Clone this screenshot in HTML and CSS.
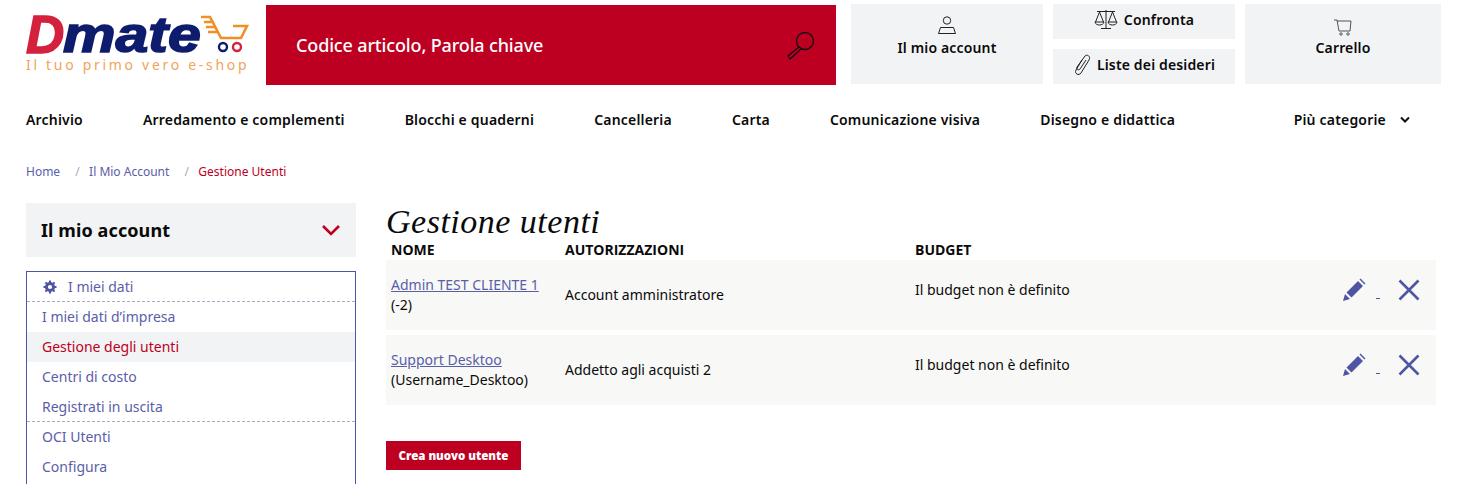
FILE: index.html
```html
<!DOCTYPE html>
<html lang="it">
<head>
    <meta charset="UTF-8">
    <title>Gestione utenti</title>
    <link rel="stylesheet" href="styles.css">
</head>
<body>

    <header class="header-container">
        <a class="logo">
            <div class="logo-top">
                <span class="logo-d">D</span><span class="logo-mate">mate</span>
                <svg class="logo-cart" width="50" height="40" viewBox="0 0 50 40">
                    <path d="M1 2h9l11 21h20l6-12H33" fill="none" stroke="#ef8f24" stroke-width="2.600"/>
                    <path d="M4 7h8M6 12h9M8 17h9" fill="none" stroke="#ef8f24" stroke-width="2.400"/>
                    <circle cx="23" cy="32" r="4" fill="#fff" stroke="#0e1c6e" stroke-width="2.400"/>
                    <circle cx="37" cy="32" r="4" fill="#fff" stroke="#d4213d" stroke-width="2.400"/>
                </svg>
            </div>
            <div class="logo-sub">Il tuo primo vero e-shop</div>
        </a>

        <div class="search-bar">
            <span>Codice articolo, Parola chiave</span>
            <svg width="30" height="30" viewBox="0 0 30 30">
                <circle cx="19" cy="11" r="8.500" fill="none" stroke="#111" stroke-width="1.300"/>
                <path d="M13 17l-11 9 2 3 11-10" fill="none" stroke="#111" stroke-width="1.300"/>
            </svg>
        </div>

        <a class="head-box account-box">
            <svg width="20" height="20" viewBox="0 0 20 20">
                <circle cx="10" cy="4.500" r="3.700" fill="none" stroke="#222"/>
                <path d="M3.500 11.500h13l2 6h-17z" fill="none" stroke="#222"/>
            </svg>
            <span>Il mio account</span>
        </a>

        <div class="head-stack">
            <a class="head-small">
                <svg width="24" height="20" viewBox="0 0 24 20">
                    <path d="M12 0v18M7 18.500h10M3 1.500h18M5.500 2L1.500 12M5.500 2l4 10M18.500 2l-4 10M18.500 2l4 10M1 12h9c-.5 4-8.500 4-9 0zM14 12h9c-.5 4-8.500 4-9 0z" fill="none" stroke="#222"/>
                </svg>
                <span>Confronta</span>
            </a>
            <a class="head-small">
                <svg width="18" height="21" viewBox="0 0 18 21">
                    <path d="M9 6L3 16c-2 4 3 6 5 3L16 6c2-4-2-6-4-4L4 13c-1 2 1 4 3 2l6-9" fill="none" stroke="#222"/>
                </svg>
                <span>Liste dei desideri</span>
            </a>
        </div>

        <a class="head-box cart-box">
            <svg width="20" height="18" viewBox="0 0 20 18">
                <path d="M1 2h3l2 11h11l1-10H4" fill="none" stroke="#555"/>
                <circle cx="8" cy="16" r="1.200" fill="none" stroke="#555"/>
                <circle cx="15" cy="16" r="1.200" fill="none" stroke="#555"/>
            </svg>
            <span>Carrello</span>
        </a>
    </header>

    <nav class="main-nav">
        <a>Archivio</a>
        <a>Arredamento e complementi</a>
        <a>Blocchi e quaderni</a>
        <a>Cancelleria</a>
        <a>Carta</a>
        <a>Comunicazione visiva</a>
        <a>Disegno e didattica</a>
        <a class="nav-more">Più categorie
            <svg width="10" height="8" viewBox="0 0 10 8"><path d="M1 1.500l4 4 4-4" fill="none" stroke="#111" stroke-width="2"/></svg>
        </a>
    </nav>

    <div class="breadcrumb">
        <a>Home</a><i>/</i><a>Il Mio Account</a><i>/</i><a class="current">Gestione Utenti</a>
    </div>

    <div class="page-columns">
        <aside class="sidebar">
            <div class="side-title">
                <span>Il mio account</span>
                <svg width="18" height="12" viewBox="0 0 18 12"><path d="M1 2l8 8 8-8" fill="none" stroke="#bd0021" stroke-width="2.600"/></svg>
            </div>
            <ul class="side-menu">
                <li class="side-group">
                    <svg width="14" height="14" viewBox="0 0 14 14">
                        <circle cx="7" cy="7" r="3.600" fill="none" stroke="#4f55a5" stroke-width="3"/>
                        <path d="M7 .5v13M.5 7h13M2.400 2.400l9.200 9.200M11.600 2.400l-9.200 9.200" stroke="#4f55a5" stroke-width="2" stroke-dasharray="2.400 8.200"/>
                    </svg>
                    I miei dati
                </li>
                <li>I miei dati d’impresa</li>
                <li class="active">Gestione degli utenti</li>
                <li>Centri di costo</li>
                <li class="last-in-group">Registrati in uscita</li>
                <li>OCI Utenti</li>
                <li>Configura</li>
            </ul>
        </aside>

        <main class="content">
            <h1>Gestione utenti</h1>
            <div class="user-table">
                <div class="table-head">
                    <span>NOME</span>
                    <span>AUTORIZZAZIONI</span>
                    <span>BUDGET</span>
                </div>

                <div class="table-row">
                    <div><a class="user-link">Admin TEST CLIENTE 1</a><br>(-2)</div>
                    <div>Account amministratore</div>
                    <div class="raised">Il budget non è definito</div>
                    <div class="row-actions raised">
                        <svg width="24" height="24" viewBox="0 0 24 24"><path d="M1 23l2-7 5 5zM4.500 14.500L16 3l5 5L9.500 19.500zM17.500 1.500l1-1 5 5-1 1z" fill="#4f55a5"/></svg>
                        <span class="dash"></span>
                        <svg width="22" height="22" viewBox="0 0 22 22"><path d="M1.500 1.500l19 19M20.500 1.500l-19 19" stroke="#4f55a5" stroke-width="2.600" fill="none"/></svg>
                    </div>
                </div>

                <div class="table-row">
                    <div><a class="user-link">Support Desktoo</a><br>(Username_Desktoo)</div>
                    <div>Addetto agli acquisti 2</div>
                    <div class="raised">Il budget non è definito</div>
                    <div class="row-actions raised">
                        <svg width="24" height="24" viewBox="0 0 24 24"><path d="M1 23l2-7 5 5zM4.500 14.500L16 3l5 5L9.500 19.500zM17.500 1.500l1-1 5 5-1 1z" fill="#4f55a5"/></svg>
                        <span class="dash"></span>
                        <svg width="22" height="22" viewBox="0 0 22 22"><path d="M1.500 1.500l19 19M20.500 1.500l-19 19" stroke="#4f55a5" stroke-width="2.600" fill="none"/></svg>
                    </div>
                </div>
            </div>

            <button class="new-user">Crea nuovo utente</button>
        </main>
    </div>

</body>
</html>
```

FILE: styles.css
```css
body {
    font-family: 'Noto Sans', sans-serif;
    font-size: 14px;
    color: #0a0a0a;
    background-color: #fff;
    margin: 0;
    height: 484px;
    overflow: hidden;
}

.header-container {
    display: flex;
    align-items: flex-start;
    padding: 4px 40px 0 26px;
}

/* logo */
.logo {
    width: 224px;
    margin-right: 16px;
    padding-top: 11px;
}

.logo-top {
    display: flex;
    align-items: flex-end;
    height: 40px;
    font-family: 'Liberation Sans', sans-serif;
    font-weight: bold;
    font-style: italic;
    line-height: 40px;
}

.logo-d {
    font-size: 53px;
    letter-spacing: -1px;
    color: #d4213d;
    -webkit-text-stroke: 1.5px #d4213d;
}

.logo-mate {
    font-size: 50px;
    color: #0e1c6e;
    -webkit-text-stroke: 1.6px #0e1c6e;
    transform: scaleX(1.18);
    transform-origin: left center;
    margin-right: 20px;
}

.logo-sub {
    margin-top: 0;
    font-size: 14px;
    line-height: 19px;
    letter-spacing: 2.700px;
    color: #f3a35a;
    white-space: nowrap;
}

/* search */
.search-bar {
    display: flex;
    align-items: center;
    justify-content: space-between;
    box-sizing: border-box;
    width: 570px;
    height: 80px;
    margin-top: 1px;
    margin-right: 15px;
    padding: 0 20px 0 30px;
    background-color: #bd0021;
    color: #fff;
    font-size: 18px;
    font-weight: 500;
    letter-spacing: -0.15px;
}

/* header boxes */
.head-box {
    display: flex;
    flex-direction: column;
    align-items: center;
    box-sizing: border-box;
    height: 80px;
    padding-top: 12px;
    background-color: #f2f3f5;
    font-weight: 600;
    letter-spacing: 0.15px;
    line-height: 20px;
}

.head-box svg {
    margin-bottom: 2px;
}

.account-box {
    width: 192px;
    margin-right: 10px;
}

.cart-box {
    width: 196px;
    margin-left: 10px;
}

.cart-box svg {
    margin-top: 2px;
}

.head-stack {
    display: flex;
    flex-direction: column;
    gap: 10px;
    width: 182px;
}

.head-small {
    display: flex;
    align-items: center;
    justify-content: center;
    gap: 6px;
    box-sizing: border-box;
    height: 35px;
    padding-bottom: 4px;
    background-color: #f2f3f5;
    font-weight: 600;
    letter-spacing: 0.15px;
}

/* nav */
.main-nav {
    display: flex;
    gap: 60px;
    margin-top: 25px;
    padding: 0 71px 0 26px;
    font-weight: 600;
    letter-spacing: 0.19px;
    line-height: 20px;
    white-space: nowrap;
}

.nav-more {
    display: flex;
    align-items: center;
    gap: 14px;
    margin-left: auto;
}

/* breadcrumb */
.breadcrumb {
    margin-top: 33px;
    padding-left: 26px;
    font-size: 12px;
    line-height: 18px;
    color: #5a5ea8;
}

.breadcrumb i {
    padding: 0 9.500px 0 15px;
    font-style: normal;
    color: #a9a9c4;
}

.breadcrumb .current {
    color: #bd0021;
}

/* columns */
.page-columns {
    display: flex;
    gap: 30px;
    margin-top: 22px;
    padding-left: 26px;
}

.sidebar {
    flex: none;
    width: 330px;
}

.side-title {
    display: flex;
    align-items: center;
    justify-content: space-between;
    height: 54px;
    padding: 0 16px 0 15px;
    background-color: #f2f3f5;
    font-size: 18px;
    font-weight: 700;
    letter-spacing: 0.1px;
}

.side-menu {
    list-style: none;
    margin: 14px 0 0;
    padding: 0 0 30px;
    border: 1px solid #4f55a5;
    color: #5a5ea8;
}

.side-menu li {
    height: 30px;
    padding-left: 15px;
    line-height: 29px;
}

.side-menu .side-group {
    display: flex;
    align-items: center;
    gap: 11px;
    height: 29px;
    border-bottom: 1px dashed #a9a9c4;
    padding-left: 16px;
}

.side-menu .active {
    background-color: #f2f3f5;
    color: #bd0021;
}

.side-menu .last-in-group {
    border-bottom: 1px dashed #a9a9c4;
    height: 29px;
}

/* main */
.content {
    width: 1050px;
}

h1 {
    margin: 1px 0 0;
    font-family: 'Liberation Serif', serif;
    font-style: italic;
    font-weight: normal;
    font-size: 34px;
    line-height: 36px;
    letter-spacing: 0.5px;
}

.table-head,
.table-row {
    display: grid;
}

.table-head {
    grid-template-columns: 179px 350px 1fr 120px;
    height: 20px;
    font-family: 'Open Sans', sans-serif;
    font-weight: 700;
    font-size: 14px;
    line-height: 19px;
}

.table-head span:first-child {
    padding-left: 5px;
}

.table-row {
    grid-template-columns: 174px 350px 1fr 120px;
    align-items: center;
    height: 70px;
    margin-bottom: 5px;
    padding-left: 5px;
    background-color: #f8f8f6;
    line-height: 20px;
}

.user-link {
    color: #5a5ea8;
    text-decoration: underline;
}

.raised {
    padding-bottom: 10px;
}

.row-actions {
    display: flex;
    align-items: center;
    justify-content: flex-end;
    padding-right: 16px;
}

.dash {
    width: 4px;
    height: 1px;
    margin: 16px 18px 0 10px;
    background-color: #4f55a5;
}

.new-user {
    display: block;
    width: 135px;
    height: 29px;
    margin-top: 36px;
    padding: 0;
    border: 0;
    background-color: #bd0021;
    color: #fff;
    font-family: 'Noto Sans', sans-serif;
    font-weight: 900;
    font-size: 11.500px;
}
```
